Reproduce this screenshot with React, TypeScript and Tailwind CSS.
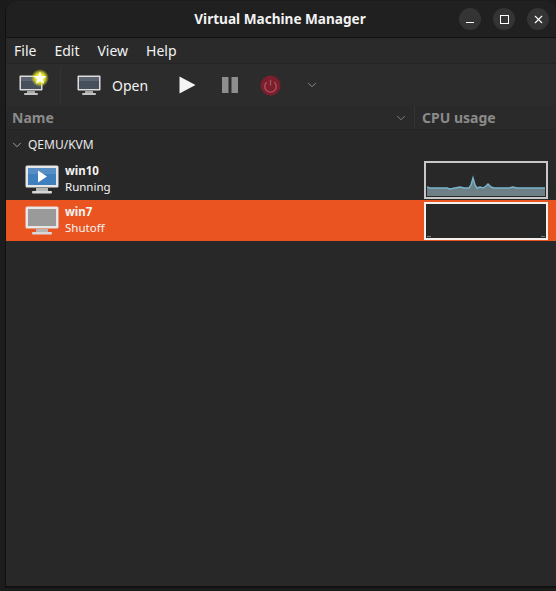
import { ChevronDown, X } from "lucide-react";

const font = { fontFamily: '"Noto Sans", sans-serif' };

function Monitor({ kind }: { kind: "run" | "off" }) {
  const screen = kind === "run" ? "#3f7fbd" : "#9a9a9a";
  return (
    <svg width="34" height="30" viewBox="0 0 34 30">
      <rect x="0.5" y="0.5" width="33" height="22" rx="1.5" fill="#e6e6e6" />
      <rect x="3" y="3" width="28" height="17" fill={screen} />
      {kind === "run" && <rect x="3" y="3" width="28" height="6" fill="#ffffff" opacity="0.12" />}
      {kind === "run" && <path d="M13 5.5 L22 11.5 L13 17.5 Z" fill="#ffffff" />}
      <rect x="11" y="23" width="12" height="3" fill="#b5b5b5" />
      <rect x="7" y="26" width="20" height="2.5" rx="1" fill="#d8d8d8" />
    </svg>
  );
}

function ToolMonitor({ star }: { star?: boolean }) {
  return (
    <span className="relative block h-[22px] w-[24px]">
      <svg width="24" height="22" viewBox="0 0 24 22">
        <rect x="0.5" y="0.5" width="23" height="15" rx="1" fill="#dcdcdc" />
        <rect x="2" y="2" width="20" height="12" fill="#46505c" />
        <rect x="2" y="2" width="20" height="4" fill="#ffffff" opacity="0.12" />
        <rect x="8" y="16" width="8" height="2" fill="#a8a8a8" />
        <rect x="5" y="18" width="14" height="2" rx="1" fill="#c4c4c4" />
      </svg>
      {star && (
        <svg className="absolute -right-[6px] -top-[6px]" width="18" height="18" viewBox="0 0 18 18">
          <defs>
            <radialGradient id="glow">
              <stop offset="0.55" stopColor="#e8e820" stopOpacity="0.95" />
              <stop offset="1" stopColor="#e8e820" stopOpacity="0" />
            </radialGradient>
          </defs>
          <circle cx="9" cy="9" r="9" fill="url(#glow)" />
          <path d="M9 2.5 L10.9 6.8 L15.5 7.2 L12 10.3 L13.1 14.8 L9 12.4 L4.9 14.8 L6 10.3 L2.5 7.2 L7.1 6.8 Z" fill="#fdfdf0" />
        </svg>
      )}
    </span>
  );
}

const line =
  "L3 24 L20 24 L23 25 L28 24 L33 23 L37 24 L42 24 L44 21 L46 14 L48 21 L50 24 L53 23 L56 24 L59 22 L61 20 L64 23 L67 24 L82 24 L86 23 L90 24 L118 24";

function Graph() {
  return (
    <svg width="118" height="32" viewBox="0 0 118 32" className="block">
      <path d={`M0 23 ${line} L118 32 L0 32 Z`} fill="#6e7f85" />
      <path d={`M0 23 ${line}`} fill="none" stroke="#78b4cc" strokeWidth="1.5" />
    </svg>
  );
}

function Row({ name, status, selected }: { name: string; status: string; selected?: boolean }) {
  return (
    <div className={`flex h-[41px] items-center ${selected ? "bg-[#e95420]" : ""}`}>
      <div className="flex w-[418px] items-center pl-[19px]">
        <Monitor kind={selected ? "off" : "run"} />
        <div className="-mt-[2px] ml-[6px] flex flex-col text-[11.5px] leading-[16px] text-[#f4f4f4]">
          <span className="font-bold">{name}</span>
          <span>{status}</span>
        </div>
      </div>
      <div className={`h-[38px] w-[124px] border-2 bg-[#282828] p-[1px] ${selected ? "border-[#f4f0ee]" : "border-[#c8c8c8]"}`}>
        {!selected && <Graph />}
        {selected && (
          <div className="flex h-full items-end justify-between">
            <span className="block h-[1px] w-[4px] bg-[#6e7f85]" />
            <span className="block h-[1px] w-[4px] bg-[#6e7f85]" />
          </div>
        )}
      </div>
    </div>
  );
}

export default function App() {
  return (
    <div className="h-[591px] w-[556px] overflow-hidden bg-[#1c1c1c] pl-[5px] pt-[1px]" style={font}>
      <div className="flex h-[587px] w-[551px] flex-col overflow-hidden rounded-tl-[12px] rounded-tr-[12px] border-b-2 border-l border-[#111111] bg-[#282828] text-[#f2f2f2]">
        <div className="relative flex h-[37px] shrink-0 items-center justify-center border-b border-[#111111] bg-[#202020] pr-[2px]">
          <span className="text-[13.6px] font-bold">Virtual Machine Manager</span>
          <div className="absolute right-[7px] top-[7px] flex gap-[12px]">
            <span className="flex h-[22px] w-[22px] items-end justify-center rounded-full bg-[#343434] pb-[7px]">
              <span className="block h-[1.5px] w-[8px] bg-white" />
            </span>
            <span className="flex h-[22px] w-[22px] items-center justify-center rounded-full bg-[#343434]">
              <span className="block h-[9px] w-[9px] border border-white" />
            </span>
            <span className="flex h-[22px] w-[22px] items-center justify-center rounded-full bg-[#343434]">
              <X size={13} strokeWidth={2} color="#ffffff" />
            </span>
          </div>
        </div>

        <div className="flex h-[26px] shrink-0 items-center gap-[18px] border-b border-[#242424] bg-[#2a2a2a] pl-[8px] text-[14px]">
          <span>File</span>
          <span>Edit</span>
          <span>View</span>
          <span>Help</span>
        </div>

        <div className="flex h-[42px] shrink-0 items-center bg-[#2c2c2c]">
          <div className="ml-[13px] mr-[17px] mt-[2px]">
            <ToolMonitor star />
          </div>
          <span className="h-[36px] w-px bg-[#333333]" />
          <div className="ml-[16px] mt-[2px]">
            <ToolMonitor />
          </div>
          <span className="ml-[11px] text-[14px]">Open</span>
          <svg className="ml-[31px]" width="17" height="18" viewBox="0 0 17 18">
            <path d="M0.5 0.5 L16.5 9 L0.5 17.5 Z" fill="#f4f4f4" />
          </svg>
          <svg className="ml-[26px]" width="16" height="16" viewBox="0 0 16 16">
            <rect x="0" y="0" width="6.5" height="16" fill="#8e8e8e" />
            <rect x="9.5" y="0" width="6.5" height="16" fill="#8e8e8e" />
          </svg>
          <svg className="ml-[22px]" width="21" height="21" viewBox="0 0 22 22">
            <circle cx="11" cy="11" r="10.5" fill="#7c1e2c" />
            <path d="M11 5 V11 M7 7.5 A6 6 0 1 0 15 7.5" fill="none" stroke="#a8545f" strokeWidth="1.4" />
          </svg>
          <ChevronDown className="ml-[24px]" size={14} strokeWidth={1.5} color="#9a9a9a" />
        </div>

        <div className="flex h-[24px] shrink-0 items-center border-b border-[#242424] bg-[#2a2a2a] text-[14px] font-bold text-[#8b8b8b]">
          <div className="flex h-full w-[409px] items-center justify-between border-r border-[#333333] pl-[6px] pr-[6px]">
            <span>Name</span>
            <ChevronDown size={14} strokeWidth={1.5} color="#8b8b8b" />
          </div>
          <span className="pl-[7px]">CPU usage</span>
        </div>

        <div className="flex h-[29px] shrink-0 items-center gap-[4px] pl-[4px] pt-[1px] text-[12px] text-[#e8e8e8]">
          <ChevronDown size={14} strokeWidth={1.5} color="#b0b0b0" />
          <span>QEMU/KVM</span>
        </div>
        <Row name="win10" status="Running" />
        <Row name="win7" status="Shutoff" selected />
      </div>
    </div>
  );
}
